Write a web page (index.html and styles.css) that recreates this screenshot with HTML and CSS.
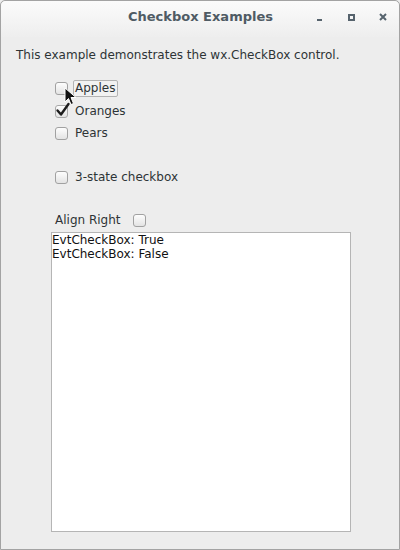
FILE: index.html
```html
<!DOCTYPE html>
<html>
<head>
<meta charset="utf-8">
<link rel="stylesheet" href="styles.css">
</head>
<body>
<div class="window">
  <div class="titlebar">
    <div class="title">Checkbox Examples</div>
    <div class="controls">
      <span class="ctl min"></span>
      <span class="ctl max"></span>
      <span class="ctl close">
        <svg width="8" height="8" viewBox="0 0 8 8"><path d="M1 1 L7 7 M7 1 L1 7" stroke="#56636d" stroke-width="2"/></svg>
      </span>
    </div>
  </div>
  <div class="content">
    <p class="intro">This example demonstrates the wx.CheckBox control.</p>
    <div class="checks">
      <label class="cb first"><span class="box"></span><span class="lbl focus">Apples</span></label>
      <label class="cb"><span class="box checked"><svg width="16" height="16" viewBox="0 0 16 16"><path d="M2.5 8.5 L6 12.5 L13.5 2" fill="none" stroke="#1c1c1c" stroke-width="2.4" stroke-linecap="round" stroke-linejoin="round"/></svg></span><span class="lbl">Oranges</span></label>
      <label class="cb"><span class="box"></span><span class="lbl">Pears</span></label>
      <label class="cb tri"><span class="box"></span><span class="lbl">3-state checkbox</span></label>
      <label class="cb right"><span class="lbl">Align Right</span><span class="box"></span></label>
    </div>
    <div class="log">
      <div>EvtCheckBox: True</div>
      <div>EvtCheckBox: False</div>
    </div>
    <svg class="cursor" width="14" height="20" viewBox="0 0 14 20"><path d="M1 1 L1 15 L4.5 11.5 L7 17.5 L9.5 16.5 L7 10.5 L12 10.5 Z" fill="#111" stroke="#fff" stroke-width="1"/></svg>
  </div>
</div>
</body>
</html>
```
FILE: styles.css
```css
html, body { margin: 0; padding: 0; }
body { width: 400px; height: 550px; background: #ededed; font-family: "DejaVu Sans", sans-serif; overflow: hidden; }
.window {
  box-sizing: border-box;
  width: 400px; height: 550px;
  border: 1px solid #a3a3a3;
  border-radius: 5px 5px 0 0;
  background: #ededed;
  display: flex; flex-direction: column;
  position: relative;
}
.titlebar {
  height: 36px;
  flex: none;
  background: linear-gradient(#fbfbfb, #eeeeee);
  border-radius: 5px 5px 0 0;
  position: relative;
  display: flex; align-items: center; justify-content: center;
}
.title { font-weight: bold; font-size: 13px; color: #4f5b64; margin-top: -6px; margin-left: 1px; }
.controls { position: absolute; right: 0; top: 0; height: 32px; display: flex; align-items: center; }
.ctl { display: flex; width: 32px; justify-content: center; align-items: center; }
.min::before { content: ""; display: block; width: 5px; height: 2px; background: #56636d; margin-top: 5px; }
.max::before { content: ""; display: block; width: 3px; height: 3px; border: 2px solid #56636d; }
.content { flex: 1; position: relative; padding: 0 0 0 15px; }
.intro { margin: 10px 0 0 0; font-size: 12px; color: #2e3436; line-height: 16px; }
.checks { display: flex; flex-direction: column; margin-left: 39px; margin-top: 14px; }
.cb { display: flex; align-items: center; height: 22px; font-size: 12px; color: #2e3436; }
.cb.first { height: 23px; align-items: flex-start; padding-top: 3px; box-sizing: border-box; }
.cb.first .box { margin-top: 2px; }
.cb.tri { margin-top: 22px; }
.cb.right { margin-top: 21px; margin-left: -1px; }
.box {
  box-sizing: border-box; width: 13px; height: 13px;
  border: 1px solid #a1a1a1; border-radius: 3px;
  background: linear-gradient(#fdfdfd, #e3e3e3);
  position: relative; flex: none;
}
.box.checked { border-color: #a8a8a8; }
.box svg { position: absolute; left: -1px; top: -4px; }
.lbl { margin-left: 5px; line-height: 15px; padding: 0 1px; border: 1px solid transparent; }
.right .lbl { margin-left: 0; margin-right: 11px; padding: 0; }
.lbl.focus { border-color: #b3b3b3; border-radius: 2px; background: #f2f2f2; padding-right: 2px; }
.log {
  box-sizing: border-box;
  margin-left: 35px; margin-top: 1px;
  width: 300px; height: 300px;
  background: #fff;
  border: 1px solid #b5b5b5;
  padding: 0;
  font-size: 12px; line-height: 14px; color: #111;
}
.cursor { position: absolute; left: 63px; top: 50px; }
```
